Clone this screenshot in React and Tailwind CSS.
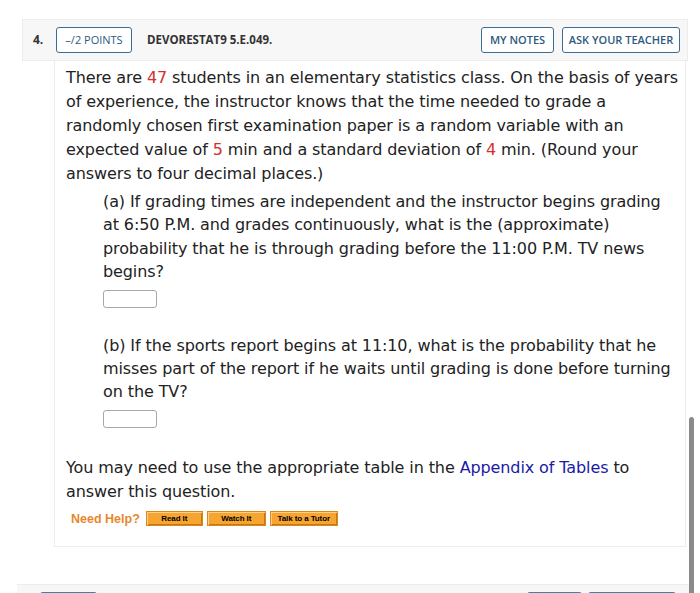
export default function App() {
  const helpBtn =
    'h-[15px] flex items-center justify-center whitespace-nowrap bg-[#f6a531] border border-[#d9881c] shadow-[inset_1px_1px_0_#fcd08a,inset_-1px_-1px_0_#c87612] text-[8px] font-bold text-black';

  return (
    <div className="w-[700px] h-[593px] bg-white overflow-hidden relative" style={{ fontFamily: '"DejaVu Sans", Verdana, sans-serif' }}>
      <div className="pt-[19px] pl-[22px] pr-[12px]">
        {/* question header */}
        <div className="h-[42px] bg-[#f7f7f7] border border-[#ececec] flex items-center pl-[10px] pr-[7px]" style={{ fontFamily: '"Open Sans", sans-serif' }}>
          <span className="text-[12px] font-bold text-[#333] w-[23px]">4.</span>
          <span className="h-[26px] w-[76px] border border-[#3e6d93] rounded-[3px] bg-white flex items-center justify-center text-[11px] text-[#2d5a80]">–/2 POINTS</span>
          <span className="ml-[15px] text-[11.5px] font-bold text-[#333]">DEVORESTAT9 5.E.049.</span>
          <div className="ml-auto flex gap-[8px]">
            <span className="h-[26px] w-[73px] border border-[#3e6d93] rounded-[3px] bg-white flex items-center justify-center text-[11px] font-semibold text-[#2d5a80]">MY NOTES</span>
            <span className="h-[26px] w-[118px] border border-[#3e6d93] rounded-[3px] bg-white flex items-center justify-center text-[11px] font-semibold text-[#2d5a80]">ASK YOUR TEACHER</span>
          </div>
        </div>

        {/* question body */}
        <div className="ml-[32px] mr-[2px] border-l border-b border-r border-[#ececec] bg-white pl-[11px] pr-[7px] pt-[5px] pb-[15px] text-[16px] leading-[24px] tracking-[-0.1px] text-[#222]">
          <p>
            There are <span className="text-[#d32f2f]">47</span> students in an elementary statistics class. On the basis of years of experience, the instructor knows that the time needed to grade a randomly chosen first examination paper is a random variable with an expected value of <span className="text-[#d32f2f]">5</span> min and a standard deviation of <span className="text-[#d32f2f]">4</span> min. (Round your answers to four decimal places.)
          </p>
          <div className="pl-[37px] pt-[4px] leading-[23.4px]">
            <p>
              (a) If grading times are independent and the instructor begins grading at 6:50 P.M. and grades continuously, what is the (approximate) probability that he is through grading before the 11:00 P.M. TV news begins?
            </p>
            <div className="mt-[6px] w-[54px] h-[18px] border border-[#a8a8a8] rounded-[3px]" />
            <p className="mt-[26px]">
              (b) If the sports report begins at 11:10, what is the probability that he misses part of the report if he waits until grading is done before turning on the TV?
            </p>
            <div className="mt-[6px] w-[54px] h-[18px] border border-[#a8a8a8] rounded-[3px]" />
          </div>
          <p className="mt-[28px]">
            You may need to use the appropriate table in the <span className="text-[#1a1aa6]">Appendix of Tables</span> to answer this question.
          </p>
          <div className="mt-[3px] ml-[5px] flex items-center gap-[4px]" style={{ fontFamily: '"Liberation Sans", Arial, sans-serif' }}>
            <span className="text-[12.5px] font-bold text-[#e8872c] mr-[2px] tracking-normal">Need Help?</span>
            <span className={helpBtn + ' w-[57px]'}>Read It</span>
            <span className={helpBtn + ' w-[59px]'}>Watch It</span>
            <span className={helpBtn + ' w-[68px]'}>Talk to a Tutor</span>
          </div>
        </div>
      </div>

      {/* next question header (cut off) */}
      <div className="mt-[37px] ml-[17px] mr-[10px] h-[20px] bg-[#f7f7f7] border-t border-[#ececec] flex items-start pt-[7px]">
        <span className="ml-[23px] w-[57px] h-[6px] border-t-2 border-x border-[#4a7ba4] rounded-t-[3px]" />
        <span className="ml-auto w-[55px] h-[6px] border-t-2 border-x border-[#4a7ba4] rounded-t-[3px]" />
        <span className="ml-[6px] mr-[14px] w-[88px] h-[6px] border-t-2 border-x border-[#4a7ba4] rounded-t-[3px]" />
      </div>

      {/* scrollbar */}
      <div className="absolute left-[689px] top-[417px] w-[5px] h-[180px] rounded-t-full bg-[#8a8a8a]" />
    </div>
  );
}
